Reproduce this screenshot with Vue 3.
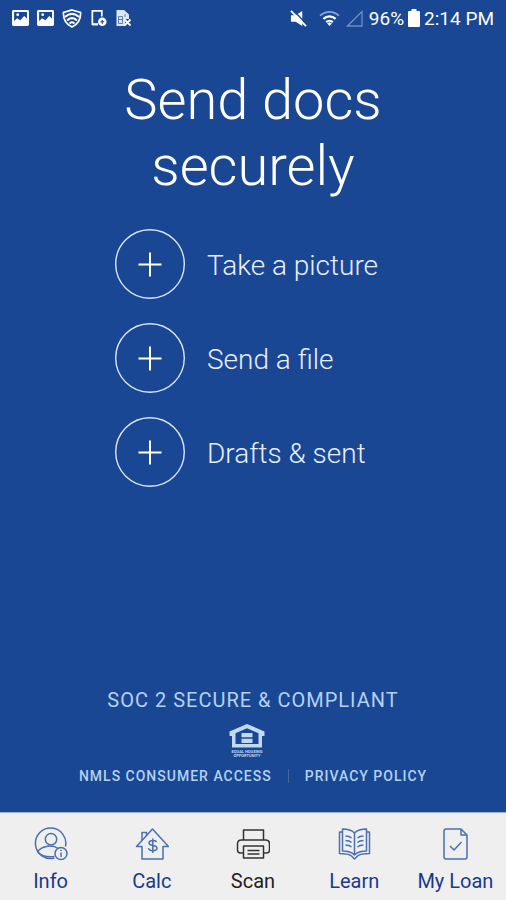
<template>
  <div class="screen">
    <header class="status-bar">
      <div class="status-group notifications">
        <svg v-for="n in 2" :key="n" class="picture-icon" viewBox="0 0 18 17">
          <path fill="#fff" fill-rule="evenodd" d="M1.500 0h15a1.500 1.500 0 0 1 1.500 1.500v14a1.500 1.500 0 0 1-1.500 1.500h-15a1.500 1.500 0 0 1-1.500-1.500v-14a1.500 1.500 0 0 1 1.500-1.500zM2.200 2.200v9.600l3.200-3 3.500 2.200 4-4.500 3 2.500V2.200z" />
          <circle cx="6" cy="5" r="1.500" fill="#fff" />
        </svg>
        <svg class="shield-icon" viewBox="0 0 20 19" fill="none" stroke="#fff" stroke-linecap="round">
          <path stroke-width="1.700" d="M10 1 18.500 3.500c.4 6-2 11.500-8.500 14.500C3.500 15 1.100 9.500 1.500 3.500z" />
          <path stroke-width="2.100" d="M3.500 7.500c4-3.200 9-3.200 13 0M5.700 10.800c2.800-2.200 5.800-2.200 8.600 0M8.200 13.900c1.200-.9 2.400-.9 3.600 0" />
        </svg>
        <svg class="device-icon" viewBox="0 0 17 19" fill="none" stroke="#fff">
          <path stroke-width="1.800" d="M12 8V2H2v14h6" />
          <path stroke-width="1.800" d="M2 16.500h6" />
          <circle cx="12.500" cy="13.500" r="4.500" fill="#fff" stroke="none" />
          <path stroke="#1a4793" stroke-width="1.200" d="M12.500 11.500v4M10.500 13.500h4" />
        </svg>
        <svg class="sim-icon" viewBox="0 0 17 18">
          <path fill="#dce6f5" d="M1.500 1h7.500l5 4.500V10H10v7H1.500z" />
          <path fill="none" stroke="#5e80b8" d="M3.500 7.500h4v7h-4zM3.500 10.500h4M10 5v3" />
          <path fill="none" stroke="#fff" stroke-width="1.800" d="m9.500 10.500 6 6m0-6-6 6" />
        </svg>
      </div>
      <div class="status-group system">
        <svg class="mute-icon" viewBox="0 0 18 18">
          <path fill="#fff" d="M1 5.500h5L13 1v16l-7-4.500H1z" />
          <path stroke="#1a4793" stroke-width="1.500" d="m3 0 15 15" />
          <path stroke="#fff" stroke-width="2" d="m1 1 16 16" />
        </svg>
        <svg class="wifi-icon" viewBox="0 0 22 17" fill="none">
          <path stroke="#8aa5d2" stroke-width="2" d="M1 6c6-5.300 14-5.300 20 0" />
          <path stroke="#fff" stroke-width="2.400" d="M4.500 9.500c4-3.500 9-3.500 13 0M7.500 12.800c2-1.800 5-1.800 7 0" />
          <path fill="#fff" d="m8.500 14 2.500-1 2.500 1-2.500 3z" />
        </svg>
        <svg class="signal-icon" viewBox="0 0 17 17" fill="none" stroke="#6f8fc6" stroke-width="1.300">
          <path d="M1.500 16H16V1.500z" />
        </svg>
        <span>96%</span>
        <svg class="battery-icon" viewBox="0 0 12 18" fill="#fff">
          <path d="M3.500 0h5v2H11a1 1 0 0 1 1 1v14a1 1 0 0 1-1 1H1a1 1 0 0 1-1-1V3a1 1 0 0 1 1-1h2.500z" />
        </svg>
        <span>2:14 PM</span>
      </div>
    </header>

    <main class="content">
      <h1 class="title">Send docs securely</h1>

      <div class="actions">
        <button v-for="action in actions" :key="action" type="button" class="action">
          <svg class="action-icon" viewBox="0 0 70 70" fill="none">
            <circle cx="35" cy="35" r="34.300" stroke="#dce5fa" stroke-width="1.400" />
            <path d="M35 23.500v24M23.500 35.500h23" stroke="#fff" stroke-width="2" />
          </svg>
          <span class="action-label">{{ action }}</span>
        </button>
      </div>

      <footer class="legal">
        <p class="compliance">SOC 2 SECURE &amp; COMPLIANT</p>
        <svg class="housing-logo" viewBox="0 0 36 34" fill="#c0daf2">
          <path fill-rule="evenodd" d="M18 0 35.500 7.500v4.500H33v11.500H3V12H.500V7.500zM18 4.200 6.500 9.300V20h23V9.300z" />
          <path d="M12.500 9h11v4.300h-11zM12.500 14.800h11v4.200h-11z" />
          <text x="18" y="29" text-anchor="middle">EQUAL HOUSING</text>
          <text x="18" y="33" text-anchor="middle">OPPORTUNITY</text>
        </svg>
        <div class="links">
          <a href="#">NMLS CONSUMER ACCESS</a>
          <span class="divider"></span>
          <a href="#">PRIVACY POLICY</a>
        </div>
      </footer>
    </main>

    <nav class="tab-bar">
      <a
        v-for="tab in tabs"
        :key="tab.name"
        href="#"
        class="tab"
        :class="{ active: tab.name === activeTab }"
        @click.prevent="activeTab = tab.name"
      >
        <svg class="tab-icon" viewBox="0 0 34 34">
          <path v-for="d in tab.paths" :key="d" :d="d" />
        </svg>
        <span>{{ tab.name }}</span>
      </a>
    </nav>
  </div>
</template>

<script setup>
import { ref } from 'vue'

const activeTab = ref('Scan')

const actions = ['Take a picture', 'Send a file', 'Drafts & sent']

const tabs = [
  {
    name: 'Info',
    paths: [
      'M20.500 31A15.200 15.200 0 1 1 31.500 19.500',
      'M17 6.500a5.700 5.700 0 1 1 0 11.400a5.700 5.700 0 1 1 0-11.400z',
      'M3.500 25C8 18.500 19 17.500 24 21.500M3.500 25c4.500 4.500 9.500 5.500 17 4.500',
      'M27 20.500a6 6 0 1 1 0 12a6 6 0 1 1 0-12z',
      'M27 25.500v4.500M27 22.800v1.200'
    ]
  },
  {
    name: 'Calc',
    paths: [
      'M7 19.500H1.500L17.500 2l16 17.500H28V32H7z',
      'M7 13.500V5.500h4.500v3',
      'M21.500 15c-.5-2-7.500-2.500-7.500 1 0 3.500 8 1.500 8 5.200 0 3.500-8 3.200-8.500 0M17.800 11.500v14.500'
    ]
  },
  {
    name: 'Scan',
    paths: [
      'M7.500 13V3h20v10',
      'M7.500 26H4.500q-3 0-3-3v-6q0-4 4-4h24q4 0 4 4v6q0 3-3 3h-3',
      'M7.500 19h20v12h-20z',
      'M11.500 23.500h12M11.500 27h12'
    ]
  },
  {
    name: 'Learn',
    paths: [
      'M17.500 6C14.500 3 10.500 2 5.500 2v22c5 0 9 1 12 4 3-3 7-4 12-4V2c-5 0-9 1-12 4zM17.500 6v22',
      'M5.500 5H2.500v21.500c6 0 9.500.5 12 2.500l3 3 3-3c2.500-2 6-2.500 12-2.500V5h-3',
      'M8.500 9q4 0 6 2M8.500 13.500q4 0 6 2M8.500 18q4 0 6 2M26.500 9q-4 0-6 2M26.500 13.500q-4 0-6 2M26.500 18q-4 0-6 2'
    ]
  },
  {
    name: 'My Loan',
    paths: [
      'M8 2h15l6 6v22q0 2-2 2H8q-2 0-2-2V4q0-2 2-2z',
      'M23 2v6h6',
      'm12 19 4 4 7.500-8'
    ]
  }
]
</script>

<style>
body {
  margin: 0;
  background: #1a4793;
}
</style>

<style scoped>
.screen {
  display: flex;
  flex-direction: column;
  min-height: 100vh;
  background: #1a4793;
  color: #fff;
  font-family: Roboto, "Liberation Sans", sans-serif;
}

.status-bar {
  display: flex;
  align-items: center;
  justify-content: space-between;
  height: 36px;
  padding: 0 12px;
  font-size: 19px;
  white-space: nowrap;
}

.status-group {
  display: flex;
  align-items: center;
}

.notifications {
  gap: 8px;
}

.system {
  gap: 4px;
}

.picture-icon {
  width: 17px;
  height: 16px;
}

.shield-icon {
  width: 20px;
  height: 19px;
}

.device-icon,
.sim-icon {
  width: 17px;
  height: 18px;
}

.mute-icon {
  width: 17px;
  height: 17px;
  margin-right: 8px;
}

.wifi-icon {
  width: 21px;
  height: 16px;
  margin-right: 2px;
}

.signal-icon {
  width: 17px;
  height: 17px;
  margin-right: 2px;
}

.battery-icon {
  width: 12px;
  height: 18px;
}

.content {
  display: flex;
  flex: 1;
  flex-direction: column;
  align-items: center;
  padding: 31px 16px 26px;
}

.title {
  max-width: 320px;
  margin: 0 0 30px;
  font-size: 56px;
  font-weight: 300;
  line-height: 66px;
  text-align: center;
}

.actions {
  display: flex;
  flex-direction: column;
  gap: 24px;
  width: 276px;
}

.action {
  display: flex;
  align-items: center;
  gap: 22px;
  padding: 0;
  border: 0;
  background: none;
  color: #e8eeff;
  font-family: inherit;
  font-size: 28px;
  font-weight: 300;
  white-space: nowrap;
  cursor: pointer;
}

.action-icon {
  flex-shrink: 0;
  width: 70px;
  height: 70px;
}

.action-label {
  padding-top: 2px;
}

.legal {
  display: flex;
  flex-direction: column;
  align-items: center;
  margin-top: auto;
  color: #b4d2f0;
}

.compliance {
  margin: 0 0 12px;
  font-size: 20px;
  line-height: 24px;
  letter-spacing: 1px;
}

.housing-logo {
  width: 36px;
  height: 34px;
  margin: 0 12px 8px 0;
}

.housing-logo text {
  font-size: 4px;
  font-weight: 700;
}

.links {
  display: flex;
  align-items: center;
  gap: 16px;
  font-size: 14px;
  font-weight: 500;
  line-height: 20px;
  letter-spacing: 1px;
}

.links a {
  color: inherit;
  text-decoration: none;
}

.divider {
  width: 1px;
  height: 14px;
  background: #4a6590;
}

.tab-bar {
  display: grid;
  grid-template-columns: repeat(5, 1fr);
  border-top: 1px solid #9fb2d2;
  background: #efefef;
}

.tab {
  display: flex;
  flex-direction: column;
  align-items: center;
  gap: 8px;
  padding: 14px 0 7px;
  color: #1a3a8c;
  font-size: 20px;
  line-height: 24px;
  text-decoration: none;
  white-space: nowrap;
}

.tab-icon {
  width: 34px;
  height: 34px;
  fill: none;
  stroke: #4a70ad;
  stroke-width: 1.5;
  stroke-linejoin: round;
}

.tab.active {
  color: #222;
}

.tab.active .tab-icon {
  stroke: #333;
}
</style>
